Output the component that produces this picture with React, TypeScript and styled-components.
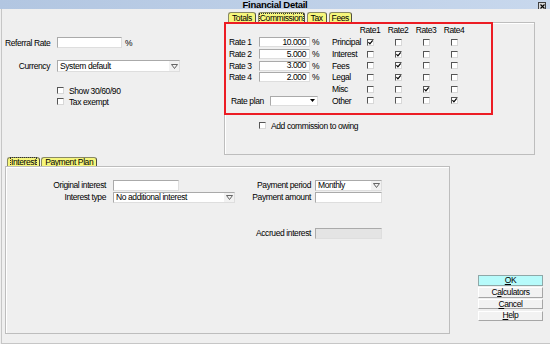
import React from 'react';
import styled, { createGlobalStyle } from 'styled-components';

const GlobalStyle = createGlobalStyle`
  html, body {
    margin: 0;
    padding: 0;
    background: #efefef;
  }
  body {
    font-family: "Liberation Sans", Arial, sans-serif;
    font-size: 8.5px;
    letter-spacing: -0.4px;
    color: #000;
  }
  * {
    box-sizing: border-box;
  }
`;

const Window = styled.div`
  width: 550px;
  height: 344px;
  display: flex;
  flex-direction: column;
  background: #efefef;
  overflow: hidden;
`;

const TitleBar = styled.div`
  flex: none;
  height: 9px;
  display: grid;
  grid-template-columns: 1fr auto 1fr;
  align-items: start;
  background: linear-gradient(to right, #b2c6e1, #c8d8ed);
  overflow: hidden;
`;

const Title = styled.div`
  grid-column: 2;
  font-weight: bold;
  font-size: 9.5px;
  letter-spacing: -0.3px;
  line-height: 9px;
  white-space: nowrap;
`;

const CloseButton = styled.div`
  grid-column: 3;
  justify-self: end;
  width: 8px;
  height: 8px;
  margin: 2px 4px 0 0;
  display: flex;
  align-items: center;
  justify-content: center;
  background: #d8d8d8;
  border: 1px solid #404040;
`;

const Body = styled.div`
  flex: 1;
  display: flex;
  flex-direction: column;
  margin-left: 1px;
  border-left: 1px solid #c6c6c6;
  border-bottom: 1px solid #c6c6c6;
  padding: 3px 0 9px 3px;
`;

const TopRow = styled.div`
  display: flex;
  height: 143px;
`;

const LeftForm = styled.div`
  width: 219px;
  padding-top: 25px;
  display: flex;
  flex-direction: column;
`;

const FormRow = styled.div<{ $top?: number; $h?: number }>`
  display: grid;
  grid-template-columns: 45px auto;
  column-gap: 7px;
  align-items: center;
  height: ${(p) => p.$h ?? 11}px;
  margin-top: ${(p) => p.$top ?? 0}px;
`;

const Label = styled.span<{ $align?: string }>`
  white-space: nowrap;
  text-align: ${(p) => p.$align ?? 'left'};
  line-height: 10px;
`;

const Inline = styled.div<{ $gap?: number }>`
  display: flex;
  align-items: center;
  gap: ${(p) => p.$gap ?? 3}px;
`;

const TextBox = styled.div<{ $w: number; $h?: number; $right?: boolean; $disabled?: boolean }>`
  width: ${(p) => p.$w}px;
  height: ${(p) => p.$h ?? 11}px;
  background: ${(p) => (p.$disabled ? '#e4e4e4' : '#fff')};
  border: 1px solid;
  border-color: #aaaaaa #dedede #dedede #aaaaaa;
  display: flex;
  align-items: center;
  justify-content: ${(p) => (p.$right ? 'flex-end' : 'flex-start')};
  padding: 0 3px 0 2px;
  line-height: 9px;
  white-space: nowrap;
  overflow: hidden;
`;

const SelectBox = styled.div<{ $w: number; $h?: number }>`
  width: ${(p) => p.$w}px;
  height: ${(p) => p.$h ?? 11}px;
  background: #fff;
  border: 1px solid;
  border-color: #aaaaaa #dedede #dedede #aaaaaa;
  display: flex;
  align-items: center;
  line-height: 9px;
  white-space: nowrap;
`;

const SelectText = styled.span`
  flex: 1;
  padding-left: 2px;
  overflow: hidden;
`;

const ArrowButton = styled.span<{ $plain?: boolean }>`
  width: 10px;
  height: 100%;
  flex: none;
  display: flex;
  align-items: center;
  justify-content: center;
  background: ${(p) => (p.$plain ? '#fff' : '#f2f2f2')};
`;

const CheckBox = styled.span`
  width: 7px;
  height: 7px;
  flex: none;
  display: inline-flex;
  align-items: center;
  justify-content: center;
  background: #fff;
  border-top: 1px solid #555;
  border-left: 1px solid #555;
  border-right: 1px solid #d8d8d8;
  border-bottom: 1px solid #d8d8d8;
`;

const CheckRow = styled.div<{ $top?: number; $left?: number }>`
  display: flex;
  align-items: center;
  gap: 5px;
  height: 9px;
  margin-top: ${(p) => p.$top ?? 0}px;
  margin-left: ${(p) => p.$left ?? 0}px;
  white-space: nowrap;
`;

const TabGroup = styled.div<{ $w: number }>`
  width: ${(p) => p.$w}px;
  display: flex;
  flex-direction: column;
`;

const TabStrip = styled.div<{ $h: number; $left: number; $gap: number }>`
  height: ${(p) => p.$h}px;
  display: flex;
  align-items: flex-end;
  gap: ${(p) => p.$gap}px;
  padding-left: ${(p) => p.$left}px;
`;

const Tab = styled.div<{ $pad: number }>`
  height: 100%;
  display: flex;
  align-items: center;
  padding: 0 ${(p) => p.$pad}px;
  background: #f6f67c;
  border: 1px solid #8a8a62;
  border-bottom: none;
  border-right-color: #505040;
  border-radius: 3px 3px 0 0;
  line-height: 8px;
  white-space: nowrap;
`;

const FocusText = styled.span`
  outline: 1px dotted #333;
`;

const TabPanel = styled.div`
  flex: 1;
  border: 1px solid #bdbdbd;
  box-shadow: inset 1px 1px 0 #fff;
  display: flex;
  flex-direction: column;
`;

const RedBox = styled.div`
  width: 269px;
  height: 93px;
  margin: -1px 0 0 -1px;
  border: 2px solid #ec1c24;
  padding-left: 3px;
`;

const Matrix = styled.div`
  display: grid;
  grid-template-columns: 30px 51px 22px 24px repeat(4, 28px);
  grid-template-rows: 12.5px repeat(6, 11.7px);
  align-items: center;
`;

const Cell = styled.div<{ $span?: number; $center?: boolean; $pad?: number }>`
  grid-column: span ${(p) => p.$span ?? 1};
  justify-self: ${(p) => (p.$center ? 'center' : 'stretch')};
  padding-left: ${(p) => p.$pad ?? 0}px;
  white-space: nowrap;
  line-height: 10px;
  display: flex;
  align-items: center;
`;

const BottomRow = styled.div`
  display: flex;
  align-items: flex-end;
  margin-top: 2px;
  height: 177px;
`;

const FieldsRow = styled.div`
  display: flex;
  padding: 12px 0 0 0;
`;

const FieldGrid = styled.div<{ $cols: string; $gap: number; $left?: number }>`
  display: grid;
  grid-template-columns: ${(p) => p.$cols};
  grid-auto-rows: 12px;
  column-gap: ${(p) => p.$gap}px;
  align-items: center;
  margin-left: ${(p) => p.$left ?? 0}px;
`;

const ButtonColumn = styled.div`
  width: 65px;
  margin: 0 0 13px 28px;
  display: flex;
  flex-direction: column;
  gap: 1.2px;
`;

const DialogButton = styled.div<{ $default?: boolean }>`
  height: 10.5px;
  display: flex;
  align-items: center;
  justify-content: center;
  line-height: 9px;
  background: ${(p) => (p.$default ? '#b7fbfb' : '#f2f2f2')};
  border: 1px solid;
  border-color: ${(p) => (p.$default ? '#8fa8a8' : '#ffffff #a6a6a6 #a6a6a6 #ffffff')};
`;

function Check({ checked }: { checked?: boolean }) {
  return (
    <CheckBox>
      {checked && (
        <svg width="5" height="5" viewBox="0 0 5 5">
          <path d="M0.4 2.1 L1.9 3.8 L4.7 0.5" stroke="#000" strokeWidth="1.2" fill="none" />
        </svg>
      )}
    </CheckBox>
  );
}

function Select({ w, h, value, solid }: { w: number; h?: number; value?: string; solid?: boolean }) {
  return (
    <SelectBox $w={w} $h={h}>
      <SelectText>{value}</SelectText>
      <ArrowButton $plain={solid}>
        {solid ? (
          <svg width="5" height="3" viewBox="0 0 5 3">
            <path d="M0 0 L5 0 L2.5 3 Z" fill="#000" />
          </svg>
        ) : (
          <svg width="7" height="5" viewBox="0 0 7 5">
            <path d="M0.5 0.5 L6.5 0.5 L3.5 4.5 Z" stroke="#555" strokeWidth="0.9" fill="none" />
          </svg>
        )}
      </ArrowButton>
    </SelectBox>
  );
}

const rateRows = [
  { label: 'Rate 1', value: '10.000', item: 'Principal', on: 0 },
  { label: 'Rate 2', value: '5.000', item: 'Interest', on: 1 },
  { label: 'Rate 3', value: '3.000', item: 'Fees', on: 1 },
  { label: 'Rate 4', value: '2.000', item: 'Legal', on: 1 },
];

const cols = [0, 1, 2, 3];

export default function App() {
  return (
    <>
      <GlobalStyle />
      <Window>
        <TitleBar>
          <Title>Financial Detail</Title>
          <CloseButton>
            <svg width="5" height="5" viewBox="0 0 5 5">
              <path d="M0.5 0.5 L4.5 4.5 M4.5 0.5 L0.5 4.5" stroke="#000" strokeWidth="1.1" />
            </svg>
          </CloseButton>
        </TitleBar>
        <Body>
          <TopRow>
            <LeftForm>
              <FormRow>
                <Label>Referral Rate</Label>
                <Inline>
                  <TextBox $w={65} />
                  <Label>%</Label>
                </Inline>
              </FormRow>
              <FormRow $top={12} $h={12}>
                <Label $align="right">Currency</Label>
                <Select w={123} h={12} value="System default" />
              </FormRow>
              <CheckRow $top={14} $left={52}>
                <Check />
                <span>Show 30/60/90</span>
              </CheckRow>
              <CheckRow $top={2} $left={52}>
                <Check />
                <span>Tax exempt</span>
              </CheckRow>
            </LeftForm>

            <TabGroup $w={311}>
              <TabStrip $h={10} $left={4} $gap={2}>
                <Tab $pad={3}>Totals</Tab>
                <Tab $pad={1}>
                  <FocusText>Commission</FocusText>
                </Tab>
                <Tab $pad={3}>Tax</Tab>
                <Tab $pad={2}>Fees</Tab>
              </TabStrip>
              <TabPanel>
                <RedBox>
                  <Matrix>
                    <Cell $span={4} />
                    {cols.map((c) => (
                      <Cell key={c} $center>
                        Rate{c + 1}
                      </Cell>
                    ))}
                    {rateRows.map((r) => (
                      <React.Fragment key={r.label}>
                        <Cell>{r.label}</Cell>
                        <Cell>
                          <TextBox $w={51} $h={10} $right>
                            {r.value}
                          </TextBox>
                        </Cell>
                        <Cell $pad={2}>%</Cell>
                        <Cell>{r.item}</Cell>
                        {cols.map((c) => (
                          <Cell key={c} $center>
                            <Check checked={c === r.on} />
                          </Cell>
                        ))}
                      </React.Fragment>
                    ))}
                    <Cell $span={3} />
                    <Cell>Misc</Cell>
                    {cols.map((c) => (
                      <Cell key={c} $center>
                        <Check checked={c === 2} />
                      </Cell>
                    ))}
                    <Cell $span={3} $pad={2}>
                      <Label style={{ width: 39 }}>Rate plan</Label>
                      <Select w={48} h={10} solid />
                    </Cell>
                    <Cell>Other</Cell>
                    {cols.map((c) => (
                      <Cell key={c} $center>
                        <Check checked={c === 3} />
                      </Cell>
                    ))}
                  </Matrix>
                </RedBox>
                <CheckRow $top={6} $left={34}>
                  <Check />
                  <span>Add commission to owing</span>
                </CheckRow>
              </TabPanel>
            </TabGroup>
          </TopRow>

          <BottomRow>
            <TabGroup $w={445} style={{ height: '100%' }}>
              <TabStrip $h={9} $left={2} $gap={1}>
                <Tab $pad={3}>
                  <FocusText>Interest</FocusText>
                </Tab>
                <Tab $pad={3}>Payment Plan</Tab>
              </TabStrip>
              <TabPanel>
                <FieldsRow>
                  <FieldGrid $cols="100px 122px" $gap={7}>
                    <Label $align="right">Original interest</Label>
                    <TextBox $w={66} />
                    <Label $align="right">Interest type</Label>
                    <Select w={122} value="No additional interest" />
                  </FieldGrid>
                  <FieldGrid $cols="71px 67px" $gap={4} $left={5}>
                    <Label $align="right">Payment period</Label>
                    <Select w={67} value="Monthly" />
                    <Label $align="right">Payment amount</Label>
                    <TextBox $w={67} />
                    <span />
                    <span />
                    <span />
                    <span />
                    <Label $align="right">Accrued interest</Label>
                    <TextBox $w={67} $disabled />
                  </FieldGrid>
                </FieldsRow>
              </TabPanel>
            </TabGroup>
            <ButtonColumn>
              <DialogButton $default>
                <span>
                  <u>O</u>K
                </span>
              </DialogButton>
              <DialogButton>
                <span>
                  C<u>a</u>lculators
                </span>
              </DialogButton>
              <DialogButton>
                <span>
                  <u>C</u>ancel
                </span>
              </DialogButton>
              <DialogButton>
                <span>
                  <u>H</u>elp
                </span>
              </DialogButton>
            </ButtonColumn>
          </BottomRow>
        </Body>
      </Window>
    </>
  );
}
